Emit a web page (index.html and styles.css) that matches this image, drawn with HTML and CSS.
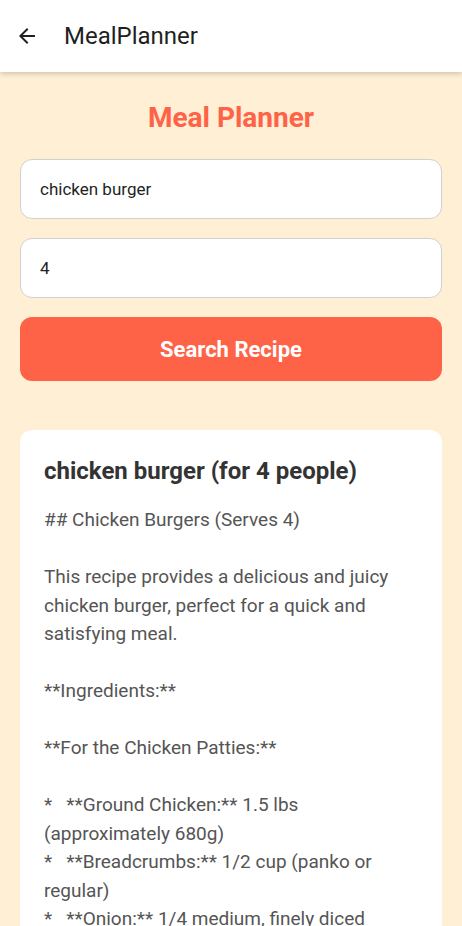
FILE: index.html
```html
<!DOCTYPE html>
<html>
<head>
<meta charset="utf-8">
<link rel="stylesheet" href="styles.css">
</head>
<body>
<header class="appbar">
  <svg class="back" width="24" height="24" viewBox="0 0 24 24"><path d="M20 11H7.83l5.59-5.59L12 4l-8 8 8 8 1.41-1.41L7.83 13H20v-2z" fill="#212121"/></svg>
  <span class="appbar-title">MealPlanner</span>
</header>
<main class="content">
  <h1 class="title">Meal Planner</h1>
  <div class="field">chicken burger</div>
  <div class="field">4</div>
  <button class="search">Search Recipe</button>
  <section class="card">
    <h2 class="card-title">chicken burger (for 4 people)</h2>
    <div class="recipe">## Chicken Burgers (Serves 4)

This recipe provides a delicious and juicy chicken burger, perfect for a quick and satisfying meal.

**Ingredients:**

**For the Chicken Patties:**

*   **Ground Chicken:** 1.5 lbs (approximately 680g)
*   **Breadcrumbs:** 1/2 cup (panko or regular)
*   **Onion:** 1/4 medium, finely diced
*   **Garlic:** 2 cloves, minced</div>
  </section>
</main>
</body>
</html>
```
FILE: styles.css
```css
html, body {
  margin: 0;
  padding: 0;
  background: #FFEFD5;
  font-family: Roboto, "Noto Sans", sans-serif;
  height: 926px;
  overflow: hidden;
}
.appbar {
  height: 72px;
  background: #fff;
  display: flex;
  align-items: center;
  padding: 0 0 0 15px;
  box-shadow: 0 2px 5px rgba(0,0,0,0.18);
  position: relative;
  z-index: 1;
}
.back {
  margin-right: 25px;
}
.appbar-title {
  font-size: 24px;
  color: #1f1f1f;
}
.content {
  padding: 0 20px;
  display: flex;
  flex-direction: column;
}
.title {
  margin: 27px 0 23px;
  text-align: center;
  font-size: 28px;
  font-weight: 700;
  color: #FF6347;
  line-height: 37px;
}
.field {
  height: 58px;
  border: 1px solid #d0d0d0;
  border-radius: 12px;
  background: #fff;
  display: flex;
  align-items: center;
  padding: 0 19px;
  font-size: 17px;
  color: #1f1f1f;
  margin-bottom: 19px;
}
.search {
  height: 64px;
  border: none;
  border-radius: 12px;
  background: #FF6347;
  color: #fff;
  font-family: Roboto, sans-serif;
  font-size: 22px;
  font-weight: 700;
  margin-bottom: 49px;
}
.card {
  background: #fff;
  border-radius: 12px;
  padding: 23px 24px;
}
.card-title {
  margin: 0 0 17px;
  font-size: 24px;
  font-weight: 700;
  color: #333;
  line-height: 36px;
}
.recipe {
  white-space: pre-wrap;
  font-size: 19px;
  line-height: 28.5px;
  color: #555;
}
```
